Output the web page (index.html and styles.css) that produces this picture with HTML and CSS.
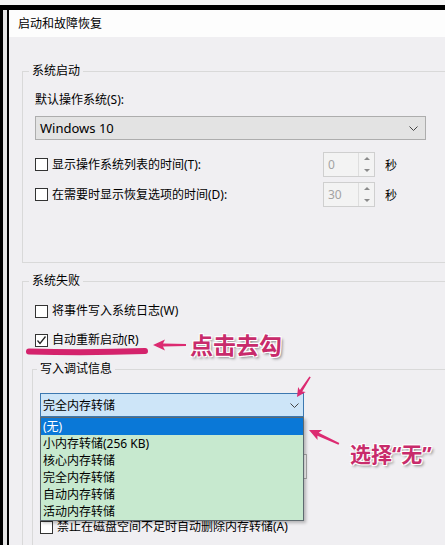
FILE: index.html
```html
<!DOCTYPE html>
<html lang="zh-CN">
<head>
  <meta charset="UTF-8" />
  <meta name="viewport" content="width=device-width, initial-scale=1.0"/>
  <title>启动和故障恢复</title>
  <link rel="stylesheet" href="styles.css">
</head>
<body>
  <div class="screen">
    <div class="back-win"></div>
    <div class="dialog">
      <div class="titlebar">启动和故障恢复</div>
      <div class="content">

        <fieldset class="group">
          <legend>系统启动</legend>
          <div class="group-body startup-body">
            <div class="field-label">默认操作系统(S):</div>
            <div class="select os-select">
              <span>Windows 10</span>
              <svg class="chevron" width="9" height="5" viewBox="0 0 9 5"><polyline points="0.5,0.5 4.5,4.5 8.5,0.5" fill="none" stroke="#444" stroke-width="1"/></svg>
            </div>
            <div class="timer-row">
              <label class="check timer-label"><span class="box"></span>显示操作系统列表的时间(T):</label>
              <div class="spin"><span class="spin-val">0</span><div class="spin-btns"><i class="up"></i><i class="down"></i></div></div>
              <span class="unit">秒</span>
            </div>
            <div class="timer-row second">
              <label class="check timer-label"><span class="box"></span>在需要时显示恢复选项的时间(D):</label>
              <div class="spin"><span class="spin-val">30</span><div class="spin-btns"><i class="up"></i><i class="down"></i></div></div>
              <span class="unit">秒</span>
            </div>
          </div>
        </fieldset>

        <fieldset class="group failure">
          <legend>系统失败</legend>
          <div class="group-body failure-body">
            <label class="check"><span class="box"></span>将事件写入系统日志(W)</label>
            <label class="check restart"><span class="box checked"><svg width="11" height="11" viewBox="0 0 11 11"><polyline points="1.5,5.5 4,8.5 9.5,1.5" fill="none" stroke="#222" stroke-width="1.3"/></svg></span>自动重新启动(R)</label>

            <fieldset class="group debug">
              <legend class="debug-legend">写入调试信息</legend>
              <div class="group-body debug-body">
                <div class="dump-select">
                  <span>完全内存转储</span>
                  <svg class="chevron" width="9" height="5" viewBox="0 0 9 5"><polyline points="0.5,0.5 4.5,4.5 8.5,0.5" fill="none" stroke="#444" stroke-width="1"/></svg>
                  <ul class="dump-list">
                    <li class="selected">(无)</li>
                    <li>小内存转储(256 KB)</li>
                    <li>核心内存转储</li>
                    <li>完全内存转储</li>
                    <li>自动内存转储</li>
                    <li>活动内存转储</li>
                  </ul>
                </div>
                <!-- rows hidden behind the open list -->
                <div class="spacer dump-file"></div>
                <div class="textbox"></div>
                <div class="spacer overwrite"></div>
                <label class="check no-delete"><span class="box"></span>禁止在磁盘空间不足时自动删除内存转储(A)</label>
              </div>
            </fieldset>
          </div>
        </fieldset>

      </div>
    </div>
  </div>

  <!-- annotations drawn over the screenshot -->
  <svg class="marks" width="445" height="545" viewBox="0 0 445 545">
    <path d="M29 351.5 Q 90 353 145 351" fill="none" stroke="#d4236c" stroke-width="6" stroke-linecap="round"/>
    <g fill="#dc2a71">
      <polygon transform="translate(153 345)" points="0,0 12,-5.5 10,-1.6 33,-1 33,1 10,1.6 12,5.5"/>
      <polygon transform="translate(297 397) rotate(-57)" points="0,0 9,-4.5 7.5,-1.4 24,-0.8 24,0.8 7.5,1.4 9,4.5"/>
      <polygon transform="translate(309 430) rotate(25)" points="0,0 12,-5.5 10,-1.6 33,-1 33,1 10,1.6 12,5.5"/>
    </g>
  </svg>
  <div class="note note-uncheck">点击去勾</div>
  <div class="note note-choose">选择“无”</div>
</body>
</html>
```

FILE: styles.css
```css
:root {
  --bg: #f0eff2;
  --border: #d9d9d9;
  --pink: #c82b6b;
}

body {
  margin: 0;
  font-family: "Noto Sans", "Noto Sans CJK SC", sans-serif;
  font-size: 12px;
  color: #000;
  background: #000;
}

.screen {
  height: 545px;
  box-sizing: border-box;
  border-top: 5px solid #f6f6f6;
  padding-top: 5px;
  display: flex;
  overflow: hidden;
}

.back-win {
  width: 4px;
  margin-left: 3px;
  background: #e4e4e4;
}

.dialog {
  flex: 1;
  margin-left: 2px;
  background: var(--bg);
  overflow: hidden;
}

.titlebar {
  height: 27px;
  line-height: 27px;
  padding-left: 9px;
  background: #fdfdfd;
}

.content {
  padding: 26px 0 0 13px;
}

.group {
  margin: 0 -60px 0 0;
  padding: 0;
  min-width: 0;
  border: 1px solid var(--border);
}

.group legend {
  margin-left: 6px;
  padding: 0 3px;
  line-height: 16px;
}

.group-body {
  padding-left: 12px;
}

.startup-body {
  padding-top: 13px;
  padding-bottom: 55px;
}

.field-label {
  line-height: 16px;
}

.select {
  margin-top: 8px;
  width: 391px;
  height: 24px;
  box-sizing: border-box;
  border: 1px solid #adadad;
  background: #e3e3e3;
  display: flex;
  align-items: center;
  justify-content: space-between;
  padding: 0 7px 0 4px;
  font-size: 13px;
}

.timer-row {
  display: flex;
  align-items: center;
  height: 25px;
  margin-top: 12px;
}

.timer-row.second {
  margin-top: 5px;
}

.check {
  display: flex;
  align-items: center;
  line-height: 16px;
}

.box {
  width: 13px;
  height: 13px;
  box-sizing: border-box;
  border: 1px solid #333;
  background: #fff;
  margin-right: 4px;
  flex-shrink: 0;
  display: flex;
  align-items: center;
  justify-content: center;
}

.timer-label {
  width: 288px;
}

.spin {
  width: 52px;
  height: 25px;
  box-sizing: border-box;
  border: 1px solid #cfcfcf;
  background: #f3f3f3;
  display: flex;
}

.spin-val {
  flex: 1;
  padding-left: 4px;
  line-height: 23px;
  color: #a3a3a3;
}

.spin-btns {
  width: 15px;
  display: flex;
  flex-direction: column;
  border-left: 1px solid #dedede;
}

.spin-btns i {
  flex: 1;
  display: flex;
  align-items: center;
  justify-content: center;
}

.spin-btns i::before {
  content: "";
  border-left: 3px solid transparent;
  border-right: 3px solid transparent;
}

.spin-btns .up::before {
  border-bottom: 3px solid #8a8a8a;
}

.spin-btns .down::before {
  border-top: 3px solid #8a8a8a;
}

.unit {
  margin-left: 10px;
}

.failure {
  margin-top: 10px;
}

.failure-body {
  padding-top: 14px;
}

.restart {
  margin-top: 13px;
}

.debug {
  margin-top: 13px;
  margin-left: -3px;
}

.debug .debug-legend {
  margin-left: 4px;
}

.debug-body {
  padding-left: 7px;
  padding-top: 16px;
  padding-bottom: 20px;
}

.dump-select {
  position: relative;
  width: 264px;
  height: 24px;
  box-sizing: border-box;
  border: 1px solid #3c78b0;
  background: #cde5f8;
  display: flex;
  align-items: center;
  justify-content: space-between;
  padding: 0 4px 0 2px;
}

.dump-list {
  position: absolute;
  left: -1px;
  top: 23px;
  width: 264px;
  box-sizing: border-box;
  margin: 0;
  padding: 0;
  list-style: none;
  border: 1px solid #5e6a70;
  background: #c7e9cf;
  box-shadow: 2px 2px 3px rgba(0, 0, 0, 0.25);
  z-index: 2;
}

.dump-list li {
  height: 17px;
  line-height: 17px;
  padding-left: 2px;
}

.dump-list li.selected {
  background: #0a78d7;
  color: #fff;
}

.spacer {
  height: 16px;
}

.dump-file {
  margin-top: 12px;
}

.textbox {
  margin-top: 9px;
  width: 267px;
  height: 25px;
  box-sizing: border-box;
  border: 1px solid #adadad;
  background: #fff;
}

.overwrite {
  margin-top: 11px;
}

.no-delete {
  margin-top: 13px;
}

.marks {
  position: absolute;
  left: 0;
  top: 0;
  pointer-events: none;
  z-index: 5;
}

.note {
  position: absolute;
  z-index: 6;
  font-family: "Noto Sans CJK SC", sans-serif;
  font-weight: 700;
  color: var(--pink);
  white-space: nowrap;
  text-shadow: 1px 1px 0 #fff, -1px -1px 0 #fff, 1px -1px 0 #fff, -1px 1px 0 #fff, 2px 2px 3px rgba(0, 0, 0, 0.45);
}

.note-uncheck {
  left: 190px;
  top: 327px;
  font-size: 23px;
  line-height: 34px;
}

.note-choose {
  left: 350px;
  top: 438px;
  font-size: 21px;
  line-height: 32px;
  font-family: "Noto Sans", "Noto Sans CJK SC", sans-serif;
}
```
